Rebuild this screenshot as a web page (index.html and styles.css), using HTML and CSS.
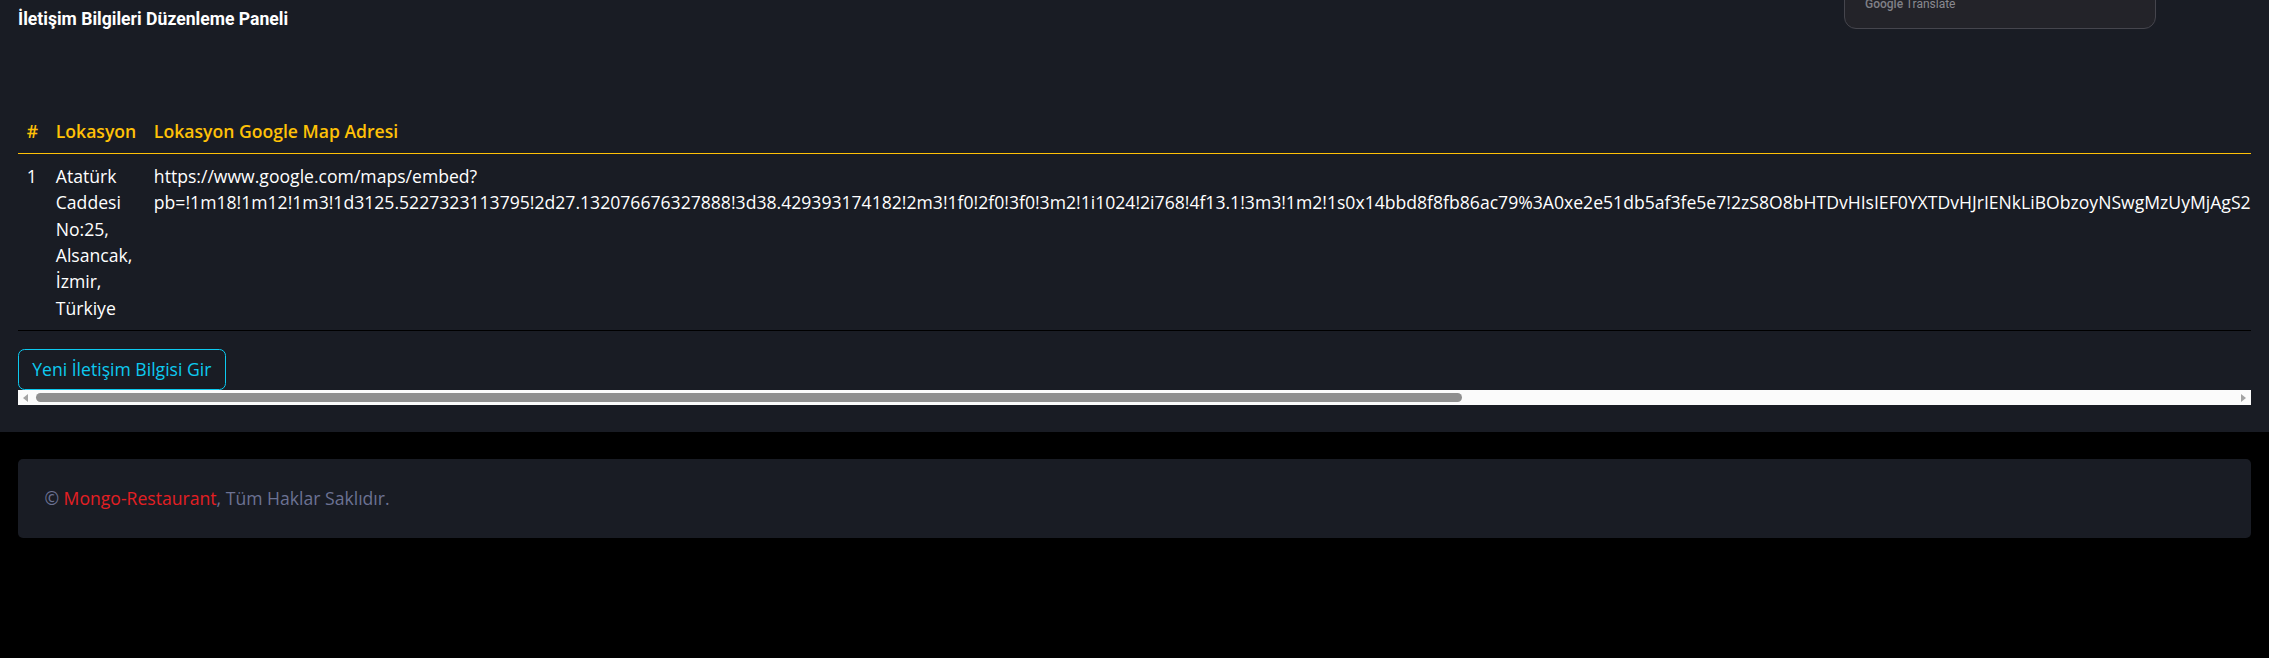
FILE: index.html
```html
<!DOCTYPE html>
<html lang="tr">
<head>
<meta charset="utf-8">
<title>İletişim Bilgileri Düzenleme Paneli</title>
<link rel="stylesheet" href="styles.css">
</head>
<body>
<div class="main">
  <h4 class="page-title">İletişim Bilgileri Düzenleme Paneli</h4>
  <div class="table-responsive">
    <div class="scroll-area">
      <table class="table">
        <thead>
          <tr>
            <th>#</th>
            <th>Lokasyon</th>
            <th>Lokasyon Google Map Adresi</th>
          </tr>
        </thead>
        <tbody>
          <tr>
            <td>1</td>
            <td>Atatürk Caddesi No:25, Alsancak, İzmir, Türkiye</td>
            <td>https://www.google.com/maps/embed?pb=!1m18!1m12!1m3!1d3125.5227323113795!2d27.132076676327888!3d38.429393174182!2m3!1f0!2f0!3f0!3m2!1i1024!2i768!4f13.1!3m3!1m2!1s0x14bbd8f8fb86ac79%3A0xe2e51db5af3fe5e7!2zS8O8bHTDvHIsIEF0YXTDvHJrIENkLiBObzoyNSwgMzUyMjAgS2FyxZ9peWFrYSwgxLB6bWlyLCBUw7xya2l5ZQ!5e0!3m2!1str!2str!4v1700000000000!5m2!1str!2str</td>
          </tr>
        </tbody>
      </table>
      <a class="btn-outline-info" href="#">Yeni İletişim Bilgisi Gir</a>
    </div>
    <div class="hscroll" aria-hidden="true">
      <span class="sb-arrow sb-left"></span>
      <div class="sb-track"><div class="sb-thumb" style="width: 64.9%"></div></div>
      <span class="sb-arrow sb-right"></span>
    </div>
  </div>
  <div class="gt-popup"><span class="gt-google">Google</span> <span class="gt-translate">Translate</span></div>
</div>
<footer class="footer">
  <span class="copy">© <a class="brand" href="#">Mongo-Restaurant</a>, Tüm Haklar Saklıdır.</span>
</footer>
</body>
</html>
```
FILE: styles.css
```css
html, body {
  margin: 0;
  padding: 0;
}
body {
  background: #000;
  font-family: "Open Sans", "Liberation Sans", sans-serif;
  font-size: 17.6px;
  line-height: 1.5;
  color: #fff;
}
.main {
  position: relative;
  background: #191c24;
  padding: 9px 18px 26.4px;
}
.page-title {
  margin: 0 0 79px;
  font-family: Roboto, "Liberation Sans", sans-serif;
  font-weight: 700;
  font-size: 17.6px;
  line-height: 1.2;
  color: #fff;
}
.table-responsive {
  display: flex;
  flex-direction: column;
}
.scroll-area {
  overflow: hidden;
  display: flex;
  flex-direction: column;
  align-items: flex-start;
}
.table {
  width: 100%;
  border-collapse: collapse;
  margin-bottom: 17.6px;
  color: #fff;
}
.table th,
.table td {
  padding: 8.8px;
  text-align: left;
  vertical-align: top;
}
.table th {
  color: #ffc107;
  font-weight: 600;
  border-bottom: 1px solid #ffc107;
  white-space: nowrap;
}
.table td {
  border-bottom: 1px solid #000;
}
.btn-outline-info {
  display: inline-block;
  padding: 6.6px 13.2px;
  border: 1.1px solid #0dcaf0;
  border-radius: 6.6px;
  color: #0dcaf0;
  text-decoration: none;
  line-height: 1.5;
}
.hscroll {
  display: flex;
  align-items: center;
  height: 15px;
  background: #fbfbfb;
  margin-top: 0;
}
.sb-arrow {
  flex: 0 0 15px;
  height: 15px;
  display: flex;
  align-items: center;
  justify-content: center;
}
.sb-arrow::before {
  content: "";
  display: block;
  width: 0;
  height: 0;
  border-top: 4px solid transparent;
  border-bottom: 4px solid transparent;
}
.sb-left::before {
  border-right: 5px solid #a3a3a3;
}
.sb-right::before {
  border-left: 5px solid #a3a3a3;
}
.sb-track {
  flex: 1;
  height: 15px;
  padding: 3px;
  box-sizing: border-box;
}
.sb-thumb {
  height: 9px;
  background: #8f8f8f;
  border-radius: 5px;
}
.gt-popup {
  position: absolute;
  left: 1844px;
  top: -40px;
  width: 312px;
  height: 69px;
  background: #232329;
  border: 1px solid #45454d;
  border-radius: 12px;
  box-sizing: border-box;
  padding: 36px 0 0 20px;
  font-family: Roboto, "Open Sans", sans-serif;
  font-size: 12px;
  line-height: 14px;
  color: #8a8a90;
}
.gt-google {
  font-weight: 500;
  color: #808087;
}
.footer {
  margin: 27px 18px;
  background: #191c24;
  border-radius: 5px;
  padding: 26.4px;
  color: #6c7293;
}
.brand {
  color: #e41f23;
  text-decoration: none;
}
```
